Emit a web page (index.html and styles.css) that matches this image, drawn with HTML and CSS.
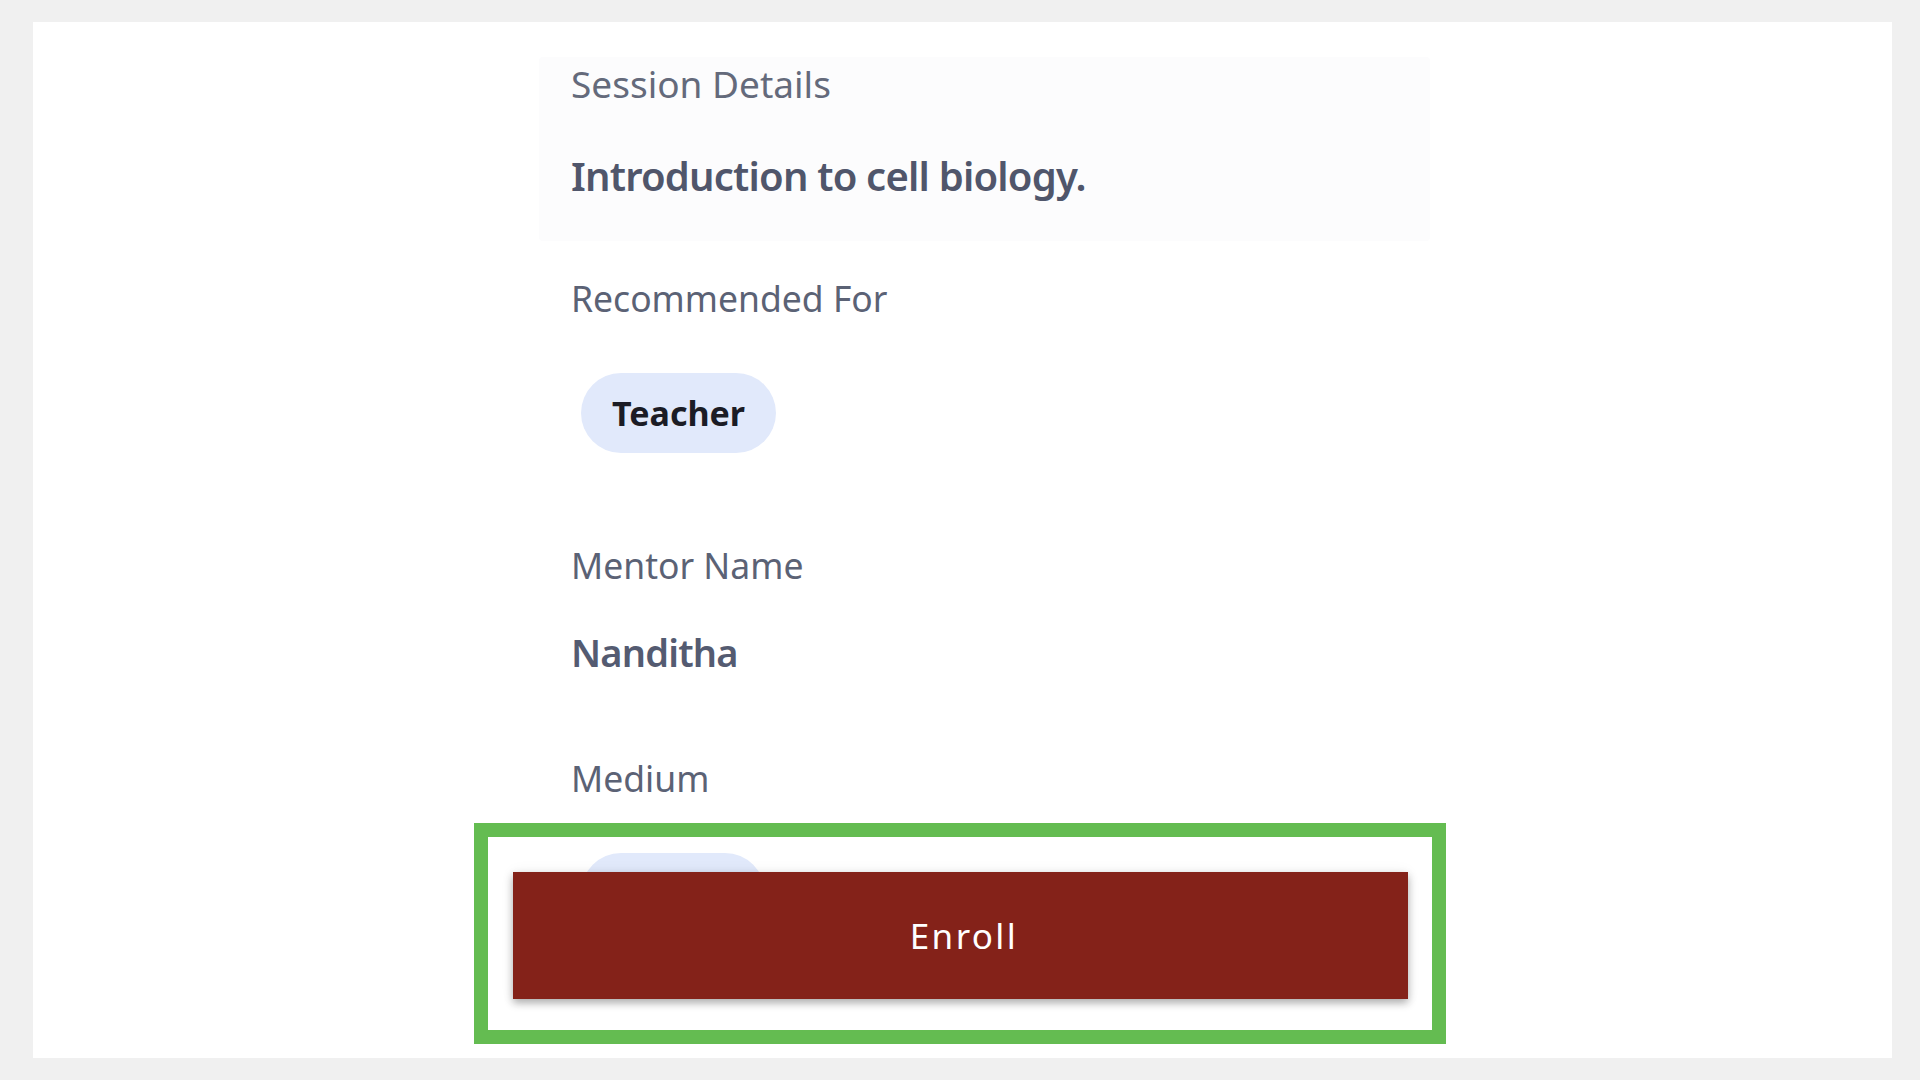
FILE: index.html
```html
<!DOCTYPE html>
<html lang="en">
<head>
<meta charset="utf-8">
<title>Session Details</title>
<link rel="stylesheet" href="styles.css">
</head>
<body>
<div class="panel">
  <div class="content">
    <section class="session">
      <div class="session-label">Session Details</div>
      <div class="session-title">Introduction to cell biology.</div>
    </section>
    <section class="field field-recommended">
      <div class="label">Recommended For</div>
      <div class="tags"><span class="tag">Teacher</span></div>
    </section>
    <section class="field field-mentor">
      <div class="label">Mentor Name</div>
      <div class="value">Nanditha</div>
    </section>
    <section class="field field-medium">
      <div class="label">Medium</div>
      <div class="tags"><span class="tag">English</span></div>
    </section>
  </div>
  <div class="footer">
    <button class="enroll">Enroll</button>
  </div>
  <div class="highlight"></div>
</div>
</body>
</html>
```

FILE: styles.css
```css
html, body {
  margin: 0;
  padding: 0;
}

body {
  background: #f0f0f0;
  width: 1920px;
  height: 1080px;
  padding: 22px 28px 22px 33px;
  box-sizing: border-box;
  font-family: "Noto Sans", "Open Sans", sans-serif;
}

.panel {
  position: relative;
  background: #ffffff;
  width: 1859px;
  height: 1036px;
  overflow: hidden;
}

.content {
  margin-left: 506px;
  width: 891px;
  padding-top: 35px;
}

.session {
  background: #fcfcfd;
  border-radius: 4px;
  height: 184px;
  box-sizing: border-box;
  padding: 3px 0 0 32px;
}

.session-label {
  font-size: 37px;
  line-height: 48px;
  color: #646a7b;
  font-weight: 400;
}

.session-title {
  margin-top: 40px;
  font-size: 40px;
  line-height: 56px;
  letter-spacing: -0.8px;
  font-weight: 600;
  color: #50566b;
}

.field {
  padding-left: 32px;
}

.field-recommended {
  margin-top: 34px;
}

.field-mentor {
  margin-top: 89px;
}

.field-medium {
  margin-top: 76px;
}

.label {
  font-size: 35.5px;
  line-height: 46px;
  color: #5b6275;
}

.tags {
  display: flex;
  gap: 16px;
  margin-top: 52px;
  padding-left: 10px;
}

.tag {
  display: inline-block;
  height: 80px;
  line-height: 80px;
  padding: 0 31px;
  border-radius: 40px;
  background: #e1e9fb;
  color: #1b1c25;
  font-size: 34px;
  font-weight: 700;
}

.value {
  margin-top: 37px;
  font-size: 38px;
  line-height: 54px;
  letter-spacing: -0.8px;
  font-weight: 600;
  color: #545b71;
}

.footer {
  position: absolute;
  left: 480px;
  top: 850px;
  width: 895px;
}

.enroll {
  display: block;
  width: 895px;
  height: 127px;
  border: 0;
  margin: 0;
  padding: 0 0 0 7px;
  background: #842219;
  color: #ffffff;
  font-family: "Noto Sans", "Open Sans", sans-serif;
  font-size: 35px;
  letter-spacing: 2.4px;
  box-shadow: 0 4px 8px rgba(0, 0, 0, 0.3), 0 0 14px rgba(0, 0, 0, 0.06);
}

.highlight {
  position: absolute;
  left: 441px;
  top: 801px;
  width: 972px;
  height: 221px;
  box-sizing: border-box;
  border: 14px solid #64bc51;
}
```
